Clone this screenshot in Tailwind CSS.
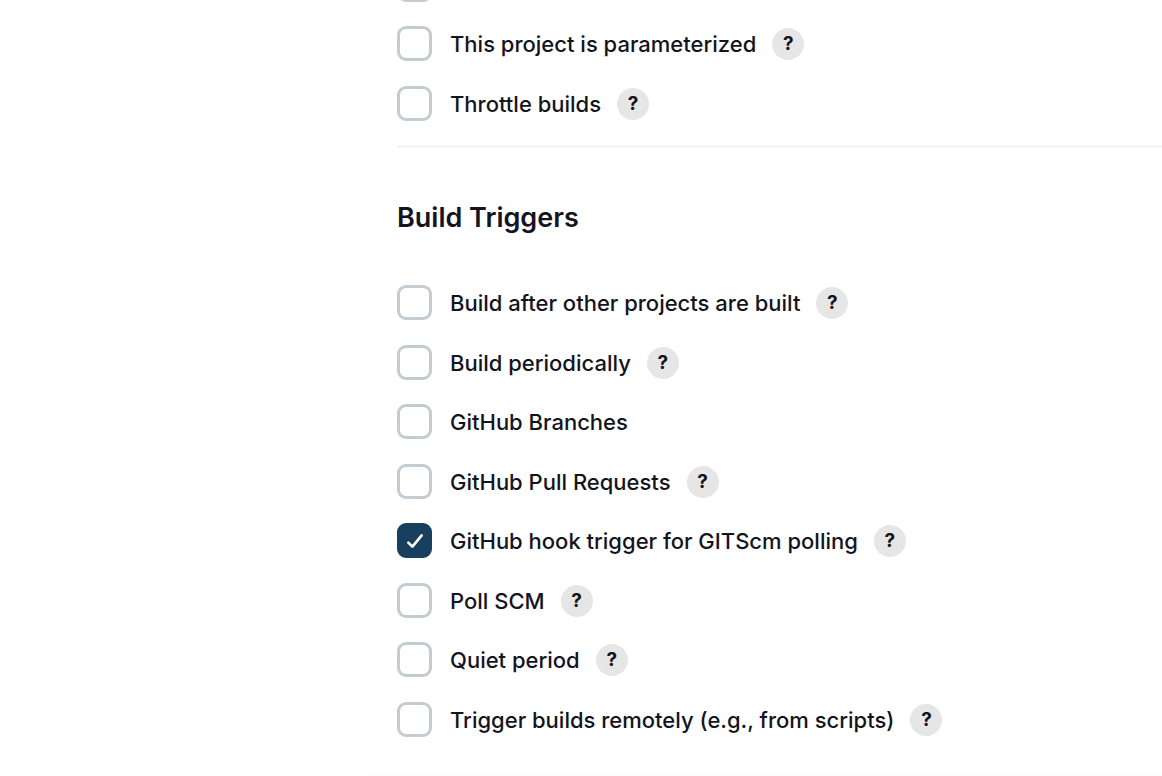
<!DOCTYPE html>
<html lang="en">
<head>
<meta charset="utf-8">
<meta name="viewport" content="width=device-width, initial-scale=1">
<title>Build Triggers</title>
<script src="https://cdn.jsdelivr.net/npm/@tailwindcss/browser@4"></script>
</head>
<body class="flex overflow-hidden bg-white font-['Inter',sans-serif] text-[22px] leading-[35px] font-medium text-[#14141f]">
<aside class="w-[365px] shrink-0"></aside>
<div class="min-w-0 flex-1">
<main class="pl-8">
  <section aria-label="General" class="-mt-[33px] border-b-3 border-[#f3f3f8] pb-6">
    <div class="flex h-[35px] items-center">
      <input type="checkbox" aria-label="Project option" class="size-[35px] shrink-0 appearance-none rounded-[9px] border-3 border-[#c3ccd1] bg-white">
    </div>
    <div class="mt-6 flex h-[35px] items-center">
      <input id="param" type="checkbox" class="size-[35px] shrink-0 appearance-none rounded-[9px] border-3 border-[#c3ccd1] bg-white">
      <label for="param" class="pt-px pl-[18px]">This project is parameterized</label>
      <button type="button" class="ml-4 size-8 shrink-0 rounded-full bg-[#e6e6e6] text-[19px] leading-8 font-bold">?</button>
    </div>
    <div class="mt-[25px] flex h-[35px] items-center">
      <input id="throttle" type="checkbox" class="size-[35px] shrink-0 appearance-none rounded-[9px] border-3 border-[#c3ccd1] bg-white">
      <label for="throttle" class="pt-px pl-[18px]">Throttle builds</label>
      <button type="button" class="ml-4 size-8 shrink-0 rounded-full bg-[#e6e6e6] text-[19px] leading-8 font-bold">?</button>
    </div>
  </section>
  <section aria-labelledby="triggers" class="pt-[52px] pb-[35px]">
    <h2 id="triggers" class="mb-[50px] text-[27px] leading-[35px] font-semibold">Build Triggers</h2>
    <div class="flex h-[35px] items-center">
      <input id="after" type="checkbox" class="size-[35px] shrink-0 appearance-none rounded-[9px] border-3 border-[#c3ccd1] bg-white">
      <label for="after" class="pt-px pl-[18px]">Build after other projects are built</label>
      <button type="button" class="ml-4 size-8 shrink-0 rounded-full bg-[#e6e6e6] text-[19px] leading-8 font-bold">?</button>
    </div>
    <div class="mt-[25px] flex h-[35px] items-center">
      <input id="periodic" type="checkbox" class="size-[35px] shrink-0 appearance-none rounded-[9px] border-3 border-[#c3ccd1] bg-white">
      <label for="periodic" class="pt-px pl-[18px]">Build periodically</label>
      <button type="button" class="ml-4 size-8 shrink-0 rounded-full bg-[#e6e6e6] text-[19px] leading-8 font-bold">?</button>
    </div>
    <div class="mt-6 flex h-[35px] items-center">
      <input id="branches" type="checkbox" class="size-[35px] shrink-0 appearance-none rounded-[9px] border-3 border-[#c3ccd1] bg-white">
      <label for="branches" class="pt-px pl-[18px]">GitHub Branches</label>
    </div>
    <div class="mt-[25px] flex h-[35px] items-center">
      <input id="pulls" type="checkbox" class="size-[35px] shrink-0 appearance-none rounded-[9px] border-3 border-[#c3ccd1] bg-white">
      <label for="pulls" class="pt-px pl-[18px]">GitHub Pull Requests</label>
      <button type="button" class="ml-4 size-8 shrink-0 rounded-full bg-[#e6e6e6] text-[19px] leading-8 font-bold">?</button>
    </div>
    <div class="mt-6 flex h-[35px] items-center">
      <span class="relative size-[35px] shrink-0">
        <input id="hook" type="checkbox" checked class="peer block size-[35px] appearance-none rounded-[9px] border-3 border-[#c3ccd1] bg-white checked:border-[#193f5f] checked:bg-[#193f5f]">
        <svg class="pointer-events-none absolute inset-0 hidden size-[35px] peer-checked:block" viewBox="0 0 35 35" fill="none" stroke="#fff" stroke-width="2.6" stroke-linecap="round" stroke-linejoin="round" aria-hidden="true"><path d="M11.3 19.6 15.4 23.7 24.7 12.4"/></svg>
      </span>
      <label for="hook" class="pt-px pl-[18px]">GitHub hook trigger for GITScm polling</label>
      <button type="button" class="ml-4 size-8 shrink-0 rounded-full bg-[#e6e6e6] text-[19px] leading-8 font-bold">?</button>
    </div>
    <div class="mt-[25px] flex h-[35px] items-center">
      <input id="poll" type="checkbox" class="size-[35px] shrink-0 appearance-none rounded-[9px] border-3 border-[#c3ccd1] bg-white">
      <label for="poll" class="pt-px pl-[18px]">Poll SCM</label>
      <button type="button" class="ml-4 size-8 shrink-0 rounded-full bg-[#e6e6e6] text-[19px] leading-8 font-bold">?</button>
    </div>
    <div class="mt-6 flex h-[35px] items-center">
      <input id="quiet" type="checkbox" class="size-[35px] shrink-0 appearance-none rounded-[9px] border-3 border-[#c3ccd1] bg-white">
      <label for="quiet" class="pt-px pl-[18px]">Quiet period</label>
      <button type="button" class="ml-4 size-8 shrink-0 rounded-full bg-[#e6e6e6] text-[19px] leading-8 font-bold">?</button>
    </div>
    <div class="mt-[25px] flex h-[35px] items-center">
      <input id="remote" type="checkbox" class="size-[35px] shrink-0 appearance-none rounded-[9px] border-3 border-[#c3ccd1] bg-white">
      <label for="remote" class="pt-px pl-[18px]">Trigger builds remotely (e.g., from scripts)</label>
      <button type="button" class="ml-4 size-8 shrink-0 rounded-full bg-[#e6e6e6] text-[19px] leading-8 font-bold">?</button>
    </div>
  </section>
</main>
<div class="h-1 rounded-tl-full bg-[#fdfdfd]"></div>
</div>
</body>
</html>
